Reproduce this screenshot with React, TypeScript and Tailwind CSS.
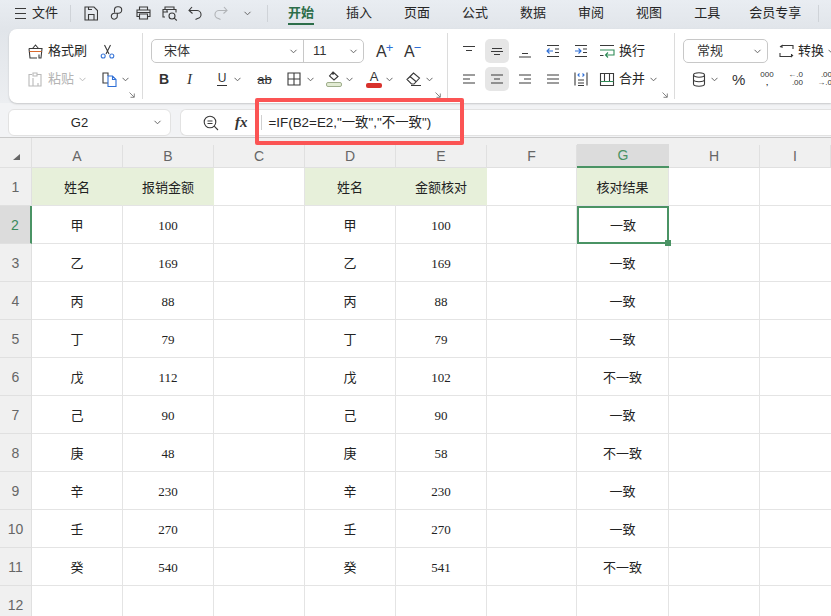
import type { ReactNode } from 'react'

const cjk = "font-['Liberation_Sans','Noto_Sans_CJK_SC',sans-serif]"

const tabs = ['插入', '页面', '公式', '数据', '审阅', '视图', '工具', '会员专享']

const rows = [
  ['甲', '100', '100', '一致'],
  ['乙', '169', '169', '一致'],
  ['丙', '88', '88', '一致'],
  ['丁', '79', '79', '一致'],
  ['戊', '112', '102', '不一致'],
  ['己', '90', '90', '一致'],
  ['庚', '48', '58', '不一致'],
  ['辛', '230', '230', '一致'],
  ['壬', '270', '270', '一致'],
  ['癸', '540', '541', '不一致'],
]

function Ico({ w = 16, h = 16, box, className, children }: { w?: number; h?: number; box?: string; className?: string; children: ReactNode }) {
  return (
    <svg
      width={w}
      height={h}
      viewBox={box ?? `0 0 ${w} ${h}`}
      fill="none"
      stroke="#3a3a3a"
      strokeWidth="1.1"
      className={`shrink-0 ${className ?? ''}`}
    >
      {children}
    </svg>
  )
}

function Chev({ w = 7, className, color = '#666' }: { w?: number; className?: string; color?: string }) {
  return (
    <svg width={w} height={5} viewBox="0 0 7 5" fill="none" stroke={color} strokeWidth="1" className={`shrink-0 ${className ?? ''}`}>
      <path d="M0.5 0.8 L3.5 3.8 L6.5 0.8" />
    </svg>
  )
}

function Launcher({ className }: { className: string }) {
  return (
    <svg width={6} height={6} viewBox="0 0 6 6" fill="none" stroke="#777" strokeWidth="0.9" className={`absolute ${className}`}>
      <path d="M0.5 0.5 L5 5 M5.3 1.5 V5.3 H1.5" />
    </svg>
  )
}

// alignment glyphs: each line is [x1, x2, y]
function Lines({ lines, className }: { lines: number[][]; className?: string }) {
  return (
    <Ico w={14} h={14} className={className}>
      {lines.map(([a, b, y]) => (
        <path key={`${a}${y}`} d={`M${a} ${y}H${b}`} />
      ))}
    </Ico>
  )
}

function TopBar() {
  return (
    <div className="flex h-[29px] items-center pl-[15px] pb-[3px]">
      <Ico w={11} h={11}>
        <path d="M0 0.5H11M0 5.5H11M0 10.5H11" />
      </Ico>
      <span className="ml-[6px] text-[13px] text-[#262626]">文件</span>
      <div className="ml-[12px] h-[17px] w-px bg-[#cfd3d8]" />
      <Ico w={14} h={15} className="ml-[13px]">
        <path d="M1 1H10L13.5 4.5V14H1Z M4.5 14V8.5H10V14 M4.5 1V3.5H8" />
      </Ico>
      <Ico w={14} h={15} className="ml-[12px]">
        <path d="M4.5 6.5V3.5A3 3 0 0 1 7.5 0.8H8.5A3.2 3.2 0 0 1 8.5 7.2H4.5A3 3 0 1 0 7.3 10V7.2" />
      </Ico>
      <Ico w={15} h={14} className="ml-[12px]">
        <path d="M3.5 4V1H11.5V4 M3.5 10.5H1V4H14V10.5H11.5 M3.5 8H11.5V13H3.5Z M1 6.5H14" />
      </Ico>
      <Ico w={16} h={15} className="ml-[11px]">
        <path d="M3 3.5V1H12V3.5 M3 11H1V3.5H14V6.5 M5 3.5V6M1 6H6" />
        <circle cx="10" cy="10" r="3" />
        <path d="M12.2 12.2L14.8 14.5" />
      </Ico>
      <Ico w={14} h={14} className="ml-[10px]">
        <path d="M4 1L1 4.5L4.5 7.5 M1 4.5H8.5A4 4 0 0 1 9.5 12.5L7.5 13.5" />
      </Ico>
      <Ico w={14} h={14} className="ml-[12px] opacity-30">
        <path d="M10 1L13 4.5L9.5 7.5 M13 4.5H5.5A4 4 0 0 0 4.5 12.5L6.5 13.5" />
      </Ico>
      <Chev w={9} className="ml-[15px]" />
      <div className="ml-[15px] h-[17px] w-px bg-[#cfd3d8]" />
      <div className="relative ml-[20px] flex h-[29px] items-center">
        <span className="text-[13px] font-semibold text-[#2d6e4a]">开始</span>
        <div className="absolute bottom-[3px] left-0 right-0 h-[2px] bg-[#2d6e4a]" />
      </div>
      {tabs.map((t, i) => (
        <span key={t} className={`text-[13px] text-[#262626] ${i === 7 ? 'ml-[29px]' : 'ml-[32px]'}`}>
          {t}
        </span>
      ))}
      <div className="ml-[17px] h-[17px] w-px bg-[#cfd3d8]" />
    </div>
  )
}

function ClipboardGroup() {
  return (
    <div className="relative my-[4px] w-[134px] shrink-0 border-r border-[#dcdcdc] pt-[6px] pl-[19px]">
      <div className="flex h-[24px] items-center">
        <Ico w={15} h={15}>
          <path d="M4.5 4.5L7.5 1L10.5 4.5 M1 4.5H14L13 14H11V10.5M9 14H2L1 4.5" />
          <path d="M1.5 7.5H13.5" stroke="#d9682c" />
        </Ico>
        <span className="ml-[5px] text-[13px] text-[#262626]">格式刷</span>
        <Ico w={15} h={15} className="ml-[13px]">
          <path d="M4.5 1L9 10 M10.5 1L6 10" />
          <circle cx="3.2" cy="12" r="2" stroke="#3b78d8" />
          <circle cx="11.8" cy="12" r="2" stroke="#3b78d8" />
        </Ico>
      </div>
      <div className="mt-[4px] flex h-[24px] items-center">
        <Ico w={15} h={15} className="opacity-35">
          <path d="M4 2.5H1V14H10V11 M5 1H9V4H5Z M9 2.5H13V14H5V6" />
        </Ico>
        <span className="ml-[5px] text-[13px] text-[#b4b4b4]">粘贴</span>
        <Chev className="ml-[5px]" color="#bbb" />
        <Ico w={15} h={15} className="ml-[16px]">
          <path d="M6 4V1H1V11H6" />
          <path d="M6 4H10.5L14 7.5V14.5H6Z M10.5 4V7.5H14" stroke="#2f6fd6" />
        </Ico>
        <Chev className="ml-[5px]" />
      </div>
      <Launcher className="right-[7px] bottom-[1px]" />
    </div>
  )
}

function FontGroup() {
  return (
    <div className="relative my-[4px] w-[305px] shrink-0 border-r border-[#dcdcdc] pt-[6px] pl-[8px]">
      <div className="flex h-[24px] items-center">
        <div className="flex h-[24px] w-[213px] items-center rounded-[5px] border border-[#c8c8c8]">
          <div className="flex h-full w-[152px] items-center justify-between border-r border-[#c8c8c8] pr-[5px] pl-[12px]">
            <span className="text-[13px] text-[#333]">宋体</span>
            <Chev w={9} />
          </div>
          <div className="flex h-full flex-1 items-center justify-between pr-[5px] pl-[9px]">
            <span className="text-[13px] text-[#333]">11</span>
            <Chev w={9} />
          </div>
        </div>
        <div className="ml-[12px] flex w-[14px] items-start">
          <span className="mt-[1px] text-[16px] leading-none text-[#333]">A</span>
          <span className="-mt-[2px] -ml-[1px] text-[13px] leading-none text-[#2f6fd6]">+</span>
        </div>
        <div className="ml-[14px] flex w-[15px] items-start">
          <span className="mt-[1px] text-[16px] leading-none text-[#333]">A</span>
          <span className="-mt-[2px] -ml-[1px] text-[13px] leading-none text-[#2f6fd6]">−</span>
        </div>
      </div>
      <div className="mt-[4px] flex h-[24px] items-center">
        <span className="ml-[8px] w-[10px] text-[14px] font-bold text-[#333]">B</span>
        <span className="ml-[18px] w-[8px] font-['Liberation_Serif',serif] text-[15px] text-[#333] italic">I</span>
        <span className="ml-[22px] w-[10px] border-b border-[#333] text-center text-[12px] leading-[13px] text-[#333]">U</span>
        <Chev className="ml-[7px]" />
        <span className="ml-[16px] w-[15px] text-center text-[13px] leading-none text-[#333] line-through">ab</span>
        <Ico w={14} h={14} className="ml-[15px]">
          <path d="M1 1H13V13H1Z M7 1V13 M1 7H13" />
        </Ico>
        <Chev className="ml-[6px]" />
        <div className="ml-[12px] flex w-[16px] flex-col items-center">
          <Ico w={12} h={10}>
            <path d="M5 1L10 5.5L6 9L1.5 5Z M5 1V4" />
          </Ico>
          <div className="mt-[1px] h-[5px] w-[16px] rounded-[2px] border border-[#9fae8c] bg-[#e2ebd3]" />
        </div>
        <Chev className="ml-[4px]" />
        <div className="ml-[13px] flex w-[16px] flex-col items-center">
          <span className="text-[13px] leading-[11px] text-[#333]">A</span>
          <div className="mt-[1px] h-[5px] w-[16px] rounded-[2px] bg-[#d8322c]" />
        </div>
        <Chev className="ml-[4px]" />
        <Ico w={16} h={14} className="ml-[13px]">
          <path d="M1 7.5L7.5 1L13.5 6L8 12H5.5Z M4 4.5L10.5 10 M5 13.5H15" />
        </Ico>
        <Chev className="ml-[4px]" />
      </div>
      <Launcher className="right-[6px] bottom-[1px]" />
    </div>
  )
}

function AlignCell({ active, children }: { active?: boolean; children: ReactNode }) {
  return (
    <div className={`flex h-[24px] w-[24px] items-center justify-center rounded-[5px] ${active ? 'bg-[#e6e6e6]' : ''}`}>
      {children}
    </div>
  )
}

function AlignGroup() {
  return (
    <div className="relative my-[4px] w-[227px] shrink-0 border-r border-[#dcdcdc] pt-[6px] pl-[9px]">
      <div className="flex h-[24px] items-center gap-[4px]">
        <AlignCell>
          <Lines lines={[[1, 13, 2.5], [4, 10, 6.5]]} />
        </AlignCell>
        <AlignCell active>
          <Lines lines={[[2, 12, 4.5], [1, 13, 7.5], [4, 10, 10.5]]} />
        </AlignCell>
        <AlignCell>
          <Lines lines={[[4, 10, 9.5], [1, 13, 13]]} />
        </AlignCell>
        <AlignCell>
          <Ico w={14} h={14}>
            <path d="M1 1.5H13M9 5H13M9 8.5H13M1 12.5H13" />
            <path d="M7 7H1M3.5 4.5L1 7L3.5 9.5" stroke="#2f6fd6" />
          </Ico>
        </AlignCell>
        <AlignCell>
          <Ico w={14} h={14}>
            <path d="M1 1.5H13M9 5H13M9 8.5H13M1 12.5H13" />
            <path d="M1 7H7M4.5 4.5L7 7L4.5 9.5" stroke="#2f6fd6" />
          </Ico>
        </AlignCell>
        <Ico w={16} h={15} className="ml-[2px]">
          <path d="M1 1.5H15 M1 11.5H4.5" />
          <path d="M1 6H15V11H7M9 8.5L6.5 11L9 13.5" stroke="#2e8b57" />
        </Ico>
        <span className="text-[13px] text-[#262626]">换行</span>
      </div>
      <div className="mt-[4px] flex h-[24px] items-center gap-[4px]">
        <AlignCell>
          <Lines lines={[[1, 13, 3], [1, 8, 7], [1, 13, 11]]} />
        </AlignCell>
        <AlignCell active>
          <Lines lines={[[1, 13, 3], [4, 10, 7], [1, 13, 11]]} />
        </AlignCell>
        <AlignCell>
          <Lines lines={[[1, 13, 3], [6, 13, 7], [1, 13, 11]]} />
        </AlignCell>
        <AlignCell>
          <Lines lines={[[1, 13, 3], [1, 13, 7], [1, 13, 11]]} />
        </AlignCell>
        <AlignCell>
          <Ico w={14} h={14}>
            <path d="M1 0.5V13.5M13 0.5V13.5M4 8H10M4 11H10M4 13.5H10" />
            <path d="M5.5 1.5L4 3L5.5 4.5M8.5 1.5L10 3L8.5 4.5" stroke="#2f6fd6" />
          </Ico>
        </AlignCell>
        <Ico w={16} h={15} className="ml-[2px]">
          <path d="M1.5 1.5H14.5V13.5H1.5Z M5.5 1.5V9 M10.5 1.5V9" />
          <path d="M1.5 9.5H14.5" stroke="#2e8b57" />
        </Ico>
        <span className="text-[13px] text-[#262626]">合并</span>
        <Chev className="ml-[1px]" />
      </div>
      <Launcher className="right-[6px] bottom-[1px]" />
    </div>
  )
}

function NumberGroup() {
  return (
    <div className="my-[4px] shrink-0 pt-[6px] pl-[8px]">
      <div className="flex h-[24px] items-center">
        <div className="flex h-[24px] w-[85px] items-center justify-between rounded-[5px] border border-[#c8c8c8] pr-[5px] pl-[13px]">
          <span className="text-[13px] text-[#333]">常规</span>
          <Chev w={9} />
        </div>
        <Ico w={15} h={14} className="ml-[11px]">
          <path d="M3 1.5H14V5 M12.5 12.5H1V9 M1 3L3 1.5L3 4 M14 11L12.5 12.5L12.5 10" />
        </Ico>
        <span className="ml-[4px] text-[13px] whitespace-nowrap text-[#262626]">转换</span>
        <Chev className="ml-[4px]" />
      </div>
      <div className="mt-[4px] flex h-[24px] items-center whitespace-nowrap">
        <Ico w={14} h={15} className="ml-[9px]">
          <ellipse cx="7" cy="3" rx="5.5" ry="2.2" />
          <path d="M1.5 3V12C1.5 13.3 4 14.2 7 14.2S12.5 13.3 12.5 12V3 M1.5 7.5C1.5 8.8 4 9.7 7 9.7S12.5 8.8 12.5 7.5" />
        </Ico>
        <Chev className="ml-[5px]" />
        <span className="ml-[14px] w-[14px] text-[15px] leading-none text-[#333]">%</span>
        <div className="ml-[14px] flex w-[14px] flex-col items-center text-[8px] leading-[8px] text-[#333]">
          <span>000</span>
          <span className="font-bold">,</span>
        </div>
        <div className="ml-[14px] flex w-[15px] flex-col items-end text-[8px] leading-[8px] text-[#333]">
          <span>←.0</span>
          <span>.00</span>
        </div>
        <div className="ml-[14px] flex w-[15px] flex-col items-end text-[8px] leading-[8px] text-[#333]">
          <span>.00</span>
          <span>→.0</span>
        </div>
      </div>
    </div>
  )
}

function FormulaBar() {
  return (
    <div className="relative flex h-[35px] items-end border-b border-[#c9c9c9] pb-px">
      <div className="ml-[8px] flex h-[27px] w-[163px] shrink-0 items-center rounded-[6px] border border-[#e2e2e2] bg-white">
        <span className="w-[141px] pt-[1px] text-center text-[13px] text-[#262626]">G2</span>
        <Chev w={9} className="ml-[3px]" />
      </div>
      <div className="ml-[9px] flex h-[27px] flex-1 items-center rounded-l-[6px] border-y border-l border-[#e2e2e2] bg-white pl-[22px]">
        <Ico w={16} h={16}>
          <circle cx="7" cy="7" r="5.8" />
          <path d="M4.5 6H9.5M4.5 8.5H9.5M11.2 11.2L15 15" />
        </Ico>
        <span className="ml-[16px] font-['Liberation_Serif',serif] text-[15px] font-bold text-[#333] italic">fx</span>
        <div className="ml-[13px] h-[15px] w-px bg-[#d0d0d0]" />
        <span className={`ml-[7px] pt-[1px] text-[13.4px] whitespace-nowrap text-[#262626] ${cjk}`}>=IF(B2=E2,"一致","不一致")</span>
      </div>
      <div className="absolute top-[-5px] left-[255px] h-[47px] w-[209px] rounded-[2px] border-[4px] border-[#fb5454]" />
    </div>
  )
}

const colHeads = ['A', 'B', 'C', 'D', 'E', 'F', 'G', 'H', 'I']

function Sheet() {
  const headFill = 'bg-[#e7f0da]'
  const serifCell = "font-['Liberation_Serif','Noto_Sans_CJK_SC',serif]"
  const cell = `flex items-center justify-center border-r border-b border-[#e4e4e4] pt-[2px] text-[13px] text-[#222] ${serifCell}`
  const rowHead = "flex items-center justify-center border-r border-b border-[#e0e0e0] bg-[#f0f0f0] pt-[2px] font-['Liberation_Sans',sans-serif] text-[14px] text-[#666]"

  return (
    <div className="grid flex-1 grid-cols-[32px_91px_91px_91px_91px_91px_90px_92px_91px_1fr] grid-rows-[30px_repeat(12,38px)] overflow-hidden bg-white">
      <div className="flex items-end justify-center border-r border-b border-[#e0e0e0] bg-[#f0f0f0] pb-[7px] pl-[1px]">
        <div className="h-0 w-0 border-b-[6px] border-l-[7px] border-b-[#666] border-l-transparent" />
      </div>
      {colHeads.map(c => (
        <div key={c} className="flex flex-col bg-[#f0f0f0]">
          <div className="h-[7px]" />
          <div
            className={`flex flex-1 items-center justify-center pt-[1px] font-['Liberation_Sans',sans-serif] text-[14px] ${
              c === 'G'
                ? 'border-b-2 border-[#4a9364] bg-[#dcdcdc] text-[#4a9364]'
                : 'border-r border-b border-[#e0e0e0] text-[#666]'
            }`}
          >
            {c}
          </div>
        </div>
      ))}

      <div className={rowHead}>1</div>
      <div className={`${cell} !border-r-[#e7f0da] ${headFill}`}>姓名</div>
      <div className={`${cell} !border-r-[#e7f0da] ${headFill}`}>报销金额</div>
      <div className={cell} />
      <div className={`${cell} !border-r-[#e7f0da] ${headFill}`}>姓名</div>
      <div className={`${cell} !border-r-[#e7f0da] ${headFill}`}>金额核对</div>
      <div className={cell} />
      <div className={`${cell} ${headFill}`}>核对结果</div>
      <div className={cell} />
      <div className="border-b border-[#e4e4e4]" />

      {rows.map((r, i) => (
        <div key={r[0]} className="contents">
          <div
            className={
              i === 0
                ? "flex items-center justify-center border-r-2 border-b border-[#4a9364] border-b-[#e0e0e0] bg-[#dcdcdc] pt-[2px] font-['Liberation_Sans',sans-serif] text-[14px] text-[#3b8a5c]"
                : rowHead
            }
          >
            {i + 2}
          </div>
          <div className={cell}>{r[0]}</div>
          <div className={cell}>{r[1]}</div>
          <div className={cell} />
          <div className={cell}>{r[0]}</div>
          <div className={cell}>{r[2]}</div>
          <div className={cell} />
          <div className={i === 0 ? `${cell} relative !border-2 !border-[#4a9364]` : cell}>
            {r[3]}
            {i === 0 && <div className="absolute -right-[4px] -bottom-[4px] h-[6px] w-[6px] bg-[#4a9364]" />}
          </div>
          <div className={cell} />
          <div className="border-b border-[#e4e4e4]" />
        </div>
      ))}

      <div className={rowHead}>12</div>
      <div className={cell} />
      <div className={cell} />
      <div className={cell} />
      <div className={cell} />
      <div className={cell} />
      <div className={cell} />
      <div className={cell} />
      <div className={cell} />
      <div />
    </div>
  )
}

export default function App() {
  return (
    <div className={`flex h-[616px] w-[831px] flex-col overflow-hidden bg-[#f2f3f5] ${cjk}`}>
      <div className="bg-gradient-to-b from-[#e9edf2] to-[#e1e5ea] pb-0">
        <TopBar />
      </div>
      <div className="bg-gradient-to-b from-[#e1e5ea] to-[#eceef1] pl-[9px]">
        <div className="flex h-[74px] overflow-hidden rounded-l-[8px] bg-white shadow-[0_1px_2px_rgba(0,0,0,0.18)]">
          <ClipboardGroup />
          <FontGroup />
          <AlignGroup />
          <NumberGroup />
        </div>
      </div>
      <FormulaBar />
      <Sheet />
    </div>
  )
}
